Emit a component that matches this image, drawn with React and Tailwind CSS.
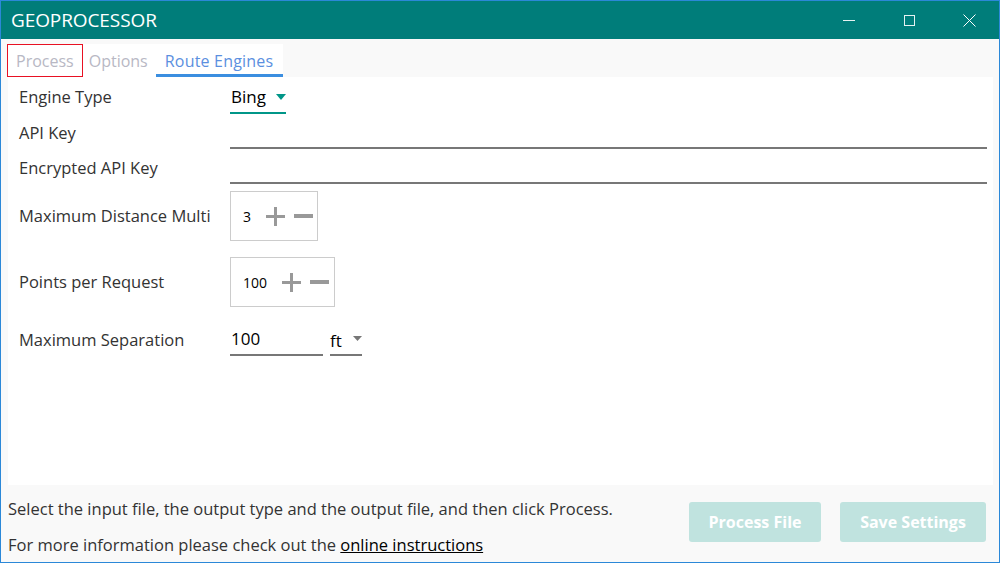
import { useState } from 'react';

const font = { fontFamily: '"Open Sans", "Noto Sans", sans-serif' };

const Stepper = ({ value, width }) => (
  <div className={`flex items-center h-[50px] border border-[#cccccc] pl-[12px] ${width}`}>
    <span className="text-[14px] text-black">{value}</span>
    <svg width="19" height="19" viewBox="0 0 19 19" className="ml-[15px]">
      <path d="M0 9.5 H19 M9.5 0 V19" stroke="#999999" strokeWidth="3" />
    </svg>
    <svg width="19" height="4" viewBox="0 0 19 4" className="ml-[9px]">
      <rect width="19" height="4" fill="#999999" />
    </svg>
  </div>
);

export default function App() {
  const [tab] = useState('Route Engines');

  return (
    <div className="w-[1000px] h-[563px] bg-[#f9f9f9] border border-[#2b88d8] flex flex-col overflow-hidden" style={font}>
      {/* Title bar */}
      <div className="h-[38px] bg-[#007d7a] flex items-center justify-between text-white shrink-0">
        <span className="pl-[10px] text-[19px] tracking-[-0.1px]">GEOPROCESSOR</span>
        <div className="flex items-center h-full">
          <div className="w-[60px] flex justify-center">
            <span className="w-[12px] h-px bg-white/90" />
          </div>
          <div className="w-[60px] flex justify-center">
            <span className="w-[11px] h-[11px] border border-white/90" />
          </div>
          <div className="w-[60px] flex justify-center">
            <svg width="13" height="13" viewBox="0 0 13 13">
              <path d="M0.5 0.5 L12.5 12.5 M12.5 0.5 L0.5 12.5" stroke="white" strokeWidth="1" />
            </svg>
          </div>
        </div>
      </div>

      {/* Tabs */}
      <div className="flex pl-[6px] pt-[5px] h-[38px] shrink-0">
        <div className="flex bg-white text-[16px]">
          <div className="border border-[#e81123] px-[8px] flex items-center text-[#b8b8c4]">Process</div>
          <div className="pl-[6px] pr-[8px] flex items-center text-[#b8b8c4]">Options</div>
          <div className="pl-[9px] pr-[10px] flex items-center text-[#5b8fe0] border-b-[3px] border-[#3b8ee0] pt-[3px] tracking-[0.2px]">
            {tab}
          </div>
        </div>
      </div>

      {/* Content */}
      <div className="flex-1 bg-white ml-[7px] mr-[6px] pl-[11px] pr-[6px] text-[16.5px] text-[#333333]">
        <div className="flex items-center h-[40px]">
          <span className="w-[211px]">Engine Type</span>
          <div className="flex items-center gap-[10px] border-b-2 border-[#009688] h-[34px] pt-[2px]">
            <span className="text-black text-[17px] pl-px">Bing</span>
            <svg width="10" height="6" viewBox="0 0 10 6"><path d="M0 0 L10 0 L5 6 Z" fill="#009688" /></svg>
          </div>
        </div>
        <div className="flex items-end h-[32px]">
          <span className="w-[211px] self-center">API Key</span>
          <div className="flex-1 border-b-2 border-[#777777]" />
        </div>
        <div className="flex items-end h-[35px]">
          <span className="w-[211px] self-center pt-[3px]">Encrypted API Key</span>
          <div className="flex-1 border-b-2 border-[#777777]" />
        </div>
        <div className="flex items-center mt-[7px]">
          <span className="w-[211px] whitespace-nowrap overflow-hidden">Maximum Distance Multi</span>
          <Stepper value="3" width="w-[88px]" />
        </div>
        <div className="flex items-center mt-[16px]">
          <span className="w-[211px]">Points per Request</span>
          <Stepper value="100" width="w-[105px]" />
        </div>
        <div className="flex items-center mt-[17px] h-[32px]">
          <span className="w-[211px]">Maximum Separation</span>
          <div className="w-[93px] h-[32px] border-b-2 border-[#777777] flex items-center text-[17px] text-black pl-px">100</div>
          <div className="ml-[7px] w-[32px] h-[32px] border-b-2 border-[#777777] flex items-center justify-between text-[17px] text-black pt-[4px]">
            <span>ft</span>
            <svg width="9" height="5" viewBox="0 0 9 5" className="mb-[6px]"><path d="M0 0 L9 0 L4.5 5 Z" fill="#777777" /></svg>
          </div>
        </div>
      </div>

      {/* Footer */}
      <div className="h-[77px] shrink-0 flex items-start justify-between pl-[7px] pr-[13px] text-[16.5px] text-[#333333]">
        <div className="pt-[12px] flex flex-col gap-[11px]">
          <span>Select the input file, the output type and the output file, and then click Process.</span>
          <span>
            For more information please check out the{' '}
            <a className="underline text-black" href="#">online instructions</a>
          </span>
        </div>
        <div className="flex gap-[19px] pt-[17px]">
          <button className="w-[132px] h-[40px] rounded-[3px] bg-[#c0e3df] text-white text-[16px] font-bold">Process File</button>
          <button className="w-[146px] h-[40px] rounded-[3px] bg-[#c0e3df] text-white text-[16px] font-bold">Save Settings</button>
        </div>
      </div>
    </div>
  );
}
